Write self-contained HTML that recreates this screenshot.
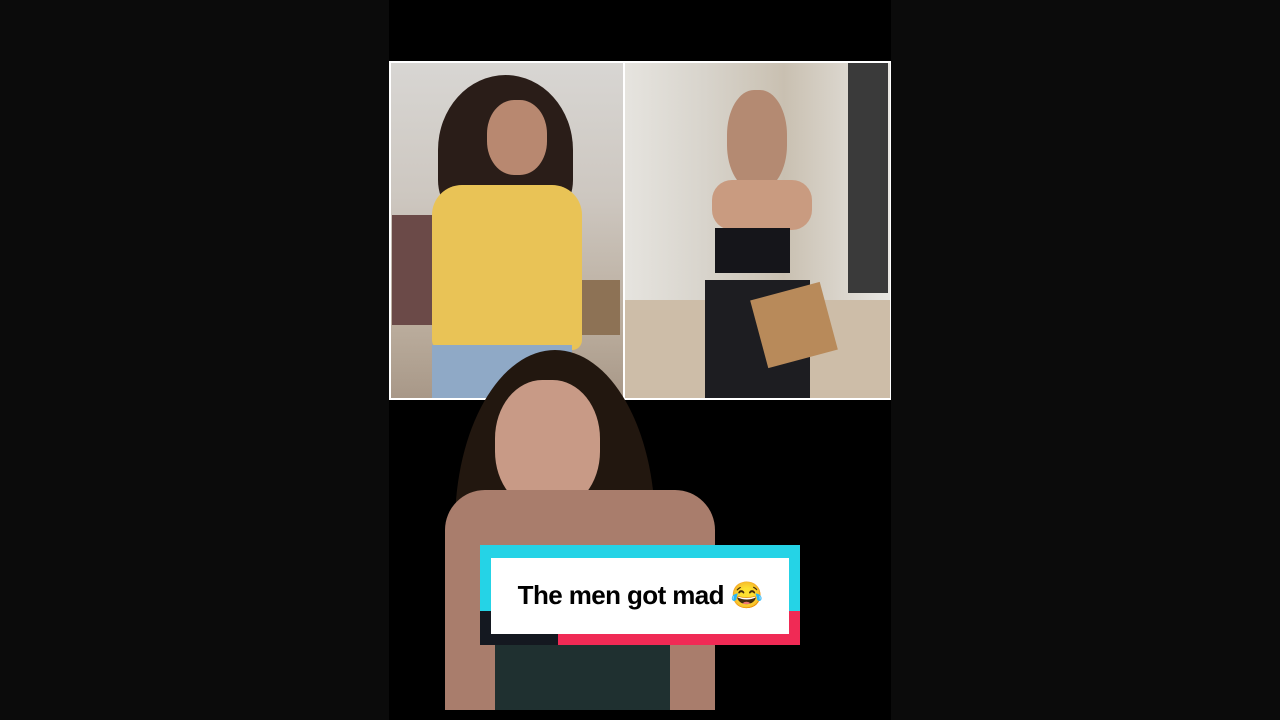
<!DOCTYPE html>
<html><head><style>
body{margin:0;width:1280px;height:720px;background:#0b0b0b;position:relative;overflow:hidden;font-family:"Liberation Sans",sans-serif}
div{position:absolute}
</style></head><body>
<div style="left:389px;top:0;width:502px;height:720px;background:#000"></div>
<div style="left:389px;top:61px;width:502px;height:339px;background:#fff"></div>
<div style="left:391px;top:63px;width:232px;height:335px;background:linear-gradient(#d8d6d3 0,#cdc7c0 40%,#b9ab9b 80%,#a89888 100%)"></div>
<div style="left:392px;top:215px;width:45px;height:110px;background:#6b4a48"></div>
<div style="left:560px;top:280px;width:60px;height:55px;background:#8d7255"></div>
<div style="left:438px;top:75px;width:135px;height:150px;background:#2a1d18;border-radius:50% 50% 30% 30%"></div>
<div style="left:487px;top:100px;width:60px;height:75px;background:#b88870;border-radius:45%"></div>
<div style="left:432px;top:185px;width:150px;height:165px;background:#e9c356;border-radius:30px 30px 10px 10px"></div>
<div style="left:432px;top:345px;width:140px;height:53px;background:#8fa9c6"></div>
<div style="left:625px;top:63px;width:265px;height:335px;background:linear-gradient(90deg,#e6e4df 0,#d8d4cc 30%,#c9c0b1 60%,#e8e6e2 100%)"></div>
<div style="left:848px;top:63px;width:40px;height:230px;background:#3a3a3a"></div>
<div style="left:625px;top:300px;width:265px;height:98px;background:#cdbda8"></div>
<div style="left:727px;top:90px;width:60px;height:100px;background:#b48a72;border-radius:45%"></div>
<div style="left:712px;top:180px;width:100px;height:50px;background:#c99b80;border-radius:20px"></div>
<div style="left:715px;top:228px;width:75px;height:45px;background:#15151a"></div>
<div style="left:705px;top:280px;width:105px;height:118px;background:#1d1d21"></div>
<div style="left:758px;top:290px;width:72px;height:70px;background:#b88a5a;transform:rotate(-15deg)"></div>
<div style="left:455px;top:350px;width:200px;height:350px;background:#22170f;border-radius:50% 50% 20% 20%"></div>
<div style="left:495px;top:380px;width:105px;height:130px;background:#c89a86;border-radius:45%"></div>
<div style="left:445px;top:490px;width:270px;height:220px;background:#a97d6c;border-radius:40px 40px 0 0"></div>
<div style="left:495px;top:600px;width:175px;height:110px;background:#1f3030"></div>
<div style="left:480px;top:545px;width:320px;height:66px;background:#25d3e6"></div>
<div style="left:480px;top:611px;width:78px;height:34px;background:#141820"></div>
<div style="left:558px;top:611px;width:242px;height:34px;background:#f02a55"></div>
<div style="left:491px;top:558px;width:298px;height:76px;background:#fff"></div>
<div style="left:491px;top:580px;width:298px;text-align:center;font-weight:bold;font-size:26px;color:#000;letter-spacing:-0.6px">The men got mad 😂</div>
</body></html>
